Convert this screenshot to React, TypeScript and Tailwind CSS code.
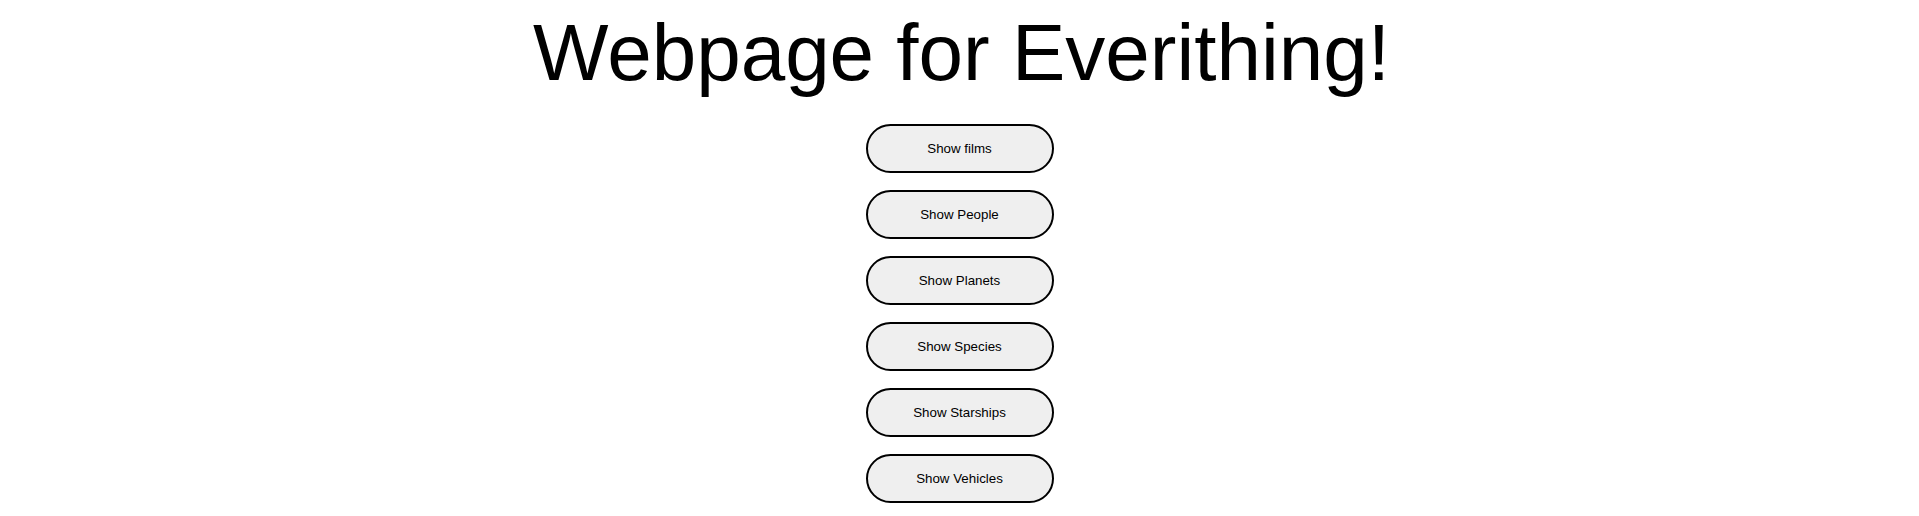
import React from "react";

const items = ["films", "People", "Planets", "Species", "Starships", "Vehicles"];

export default function App() {
	return (
		<div className="flex flex-col items-center bg-white font-['Liberation_Sans',Arial,sans-serif] text-black">
			<h1 className="text-[80px] leading-[92px] mt-[7px] translate-x-[2px]">Webpage for Everithing!</h1>
			<div className="flex flex-col items-center gap-[17px] mt-[25px]">
				{items.map((name) => (
					<button
						key={name}
						className="w-[188px] h-[49px] rounded-full border-2 border-black bg-[#efefef] text-[13.33px] text-black"
					>
						Show {name}
					</button>
				))}
			</div>
		</div>
	);
}
